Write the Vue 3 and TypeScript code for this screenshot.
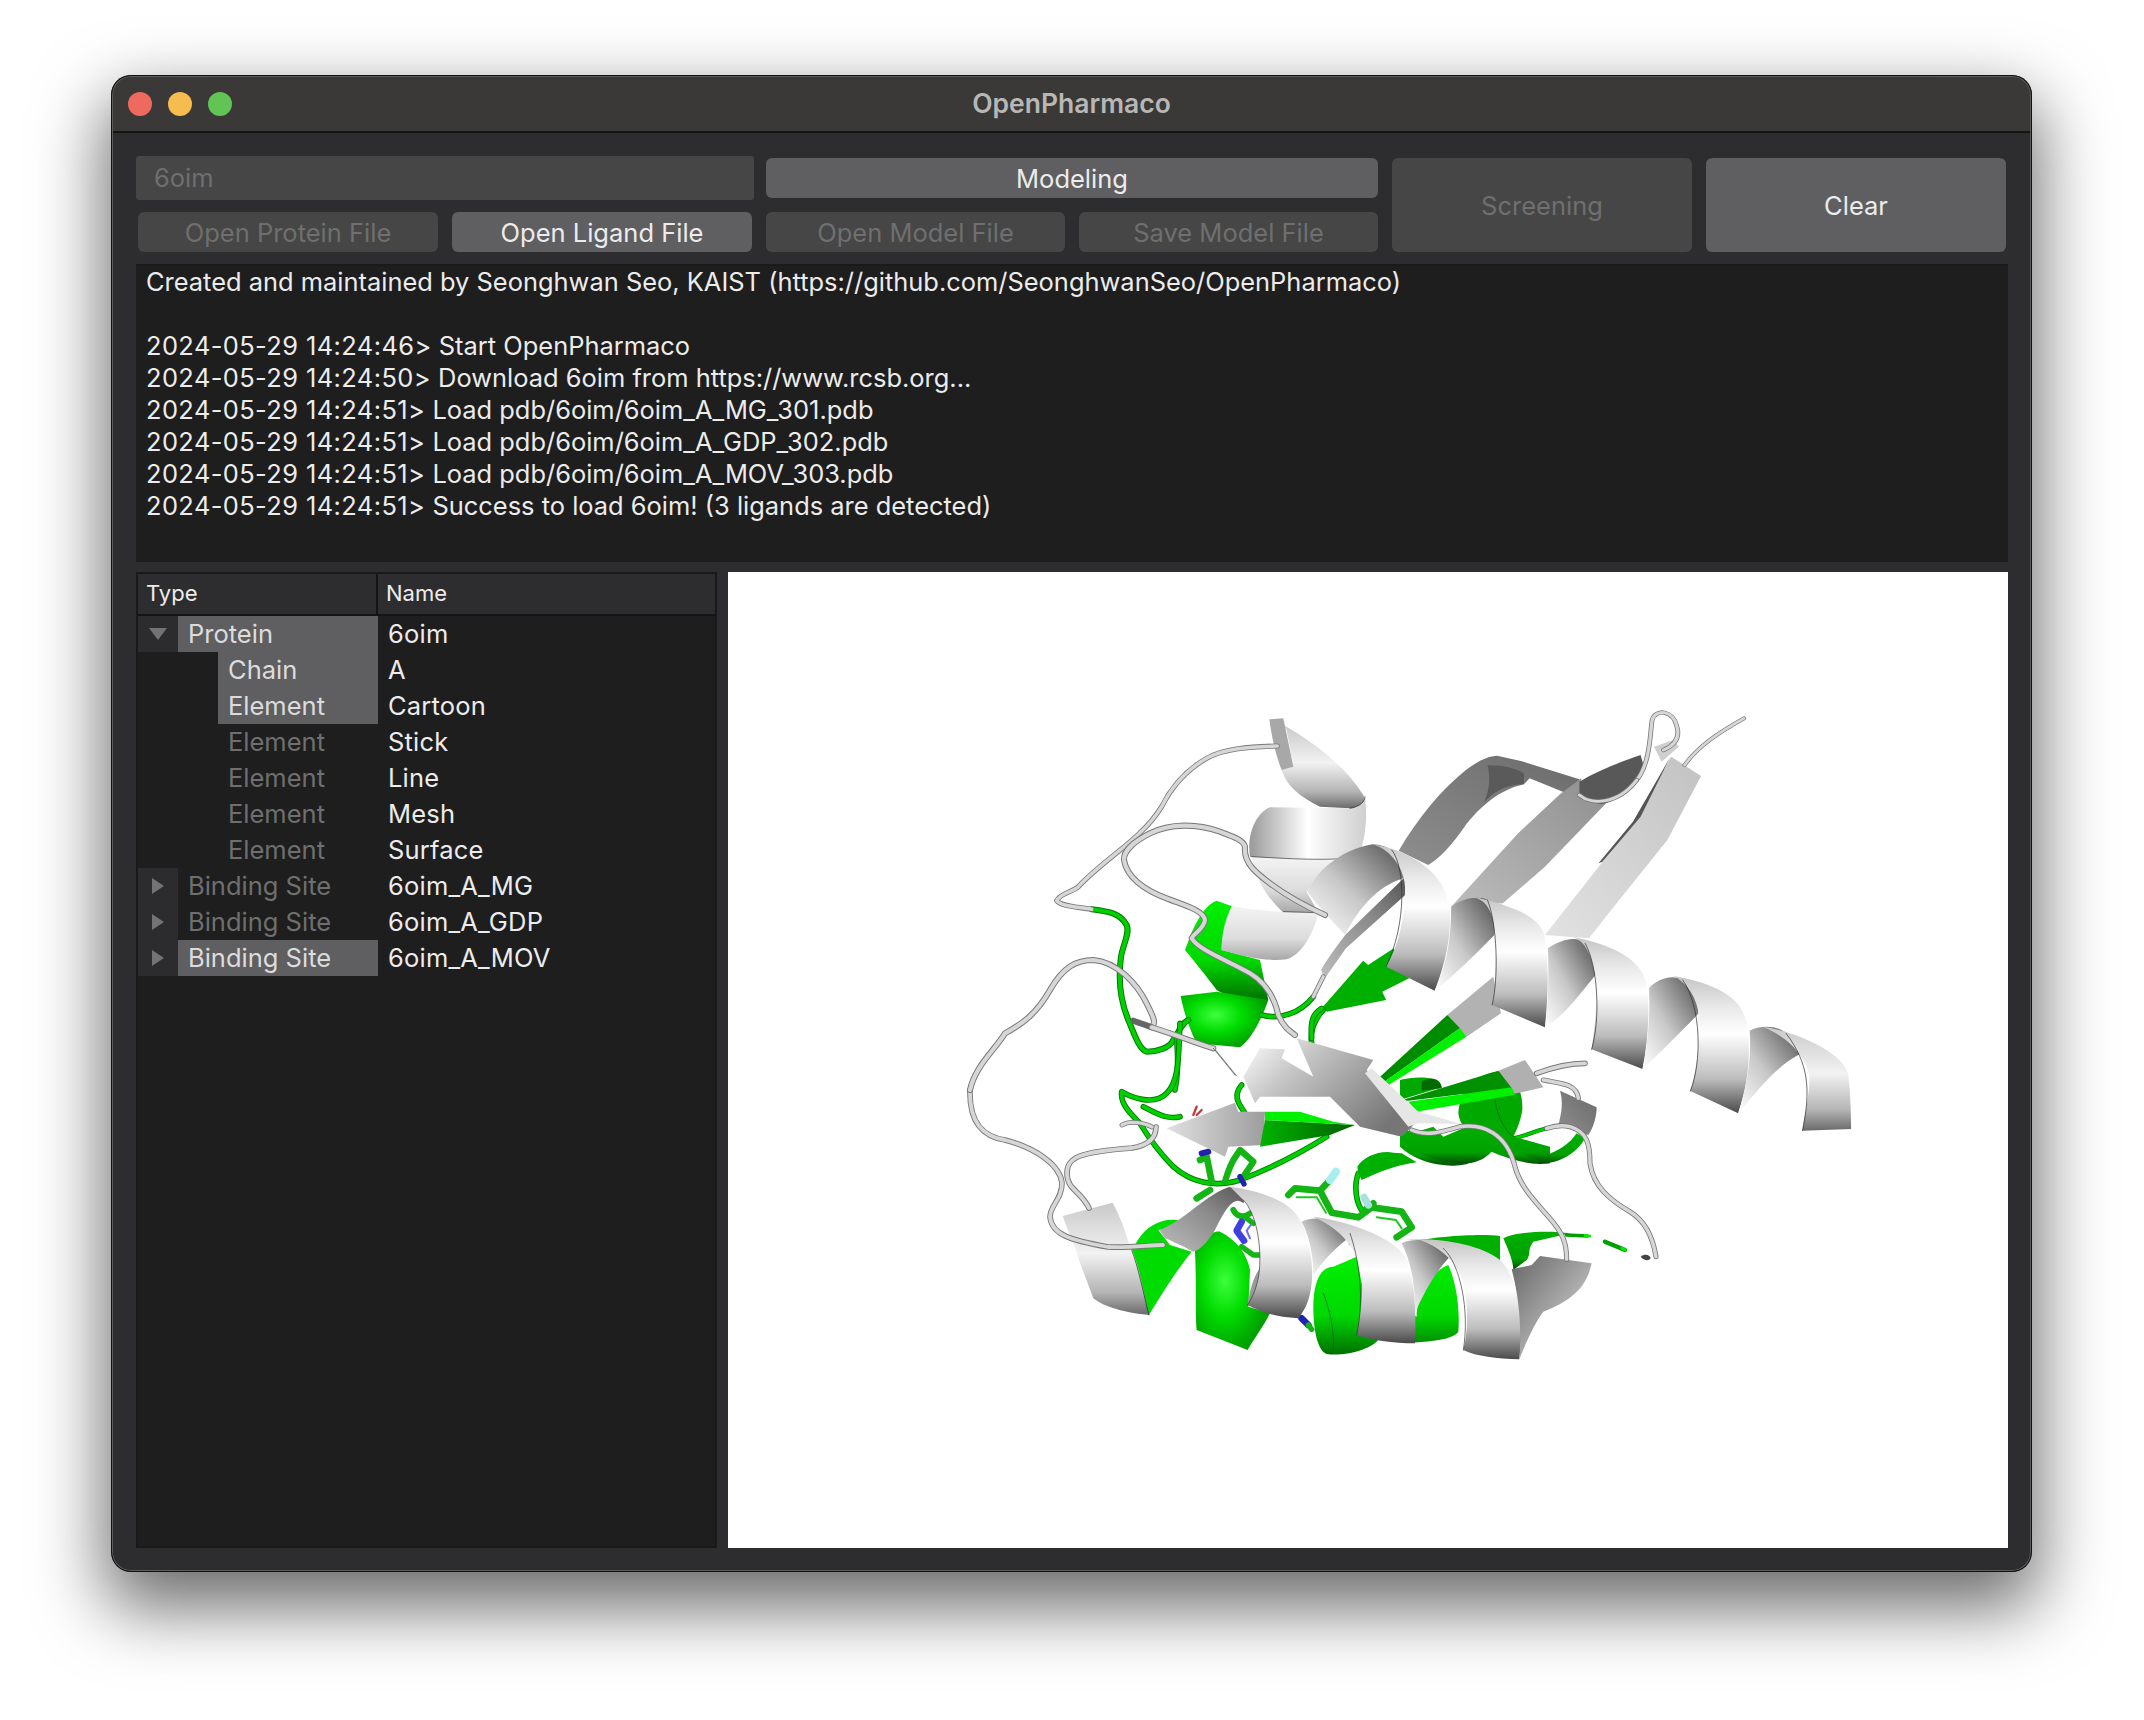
<template>
  <div class="page">
    <div class="window">
      <div class="titlebar">
        <div class="lights">
          <span class="light red"></span>
          <span class="light yellow"></span>
          <span class="light green"></span>
        </div>
        <div class="title">OpenPharmaco</div>
      </div>

      <div class="body">
        <div class="toolbar">
          <div class="col col-file">
            <div class="pdb-input">6oim</div>
            <div class="btn-row inset">
              <button class="btn off">Open Protein File</button>
              <button class="btn on">Open Ligand File</button>
            </div>
          </div>
          <div class="col col-model">
            <button class="btn on modeling">Modeling</button>
            <div class="btn-row">
              <button class="btn off">Open Model File</button>
              <button class="btn off">Save Model File</button>
            </div>
          </div>
          <button class="btn off big">Screening</button>
          <button class="btn on big">Clear</button>
        </div>

        <div class="log">
          <div v-for="(line, i) in logLines" :key="i" class="log-line"><span class="stamp">{{ line.stamp }}</span>{{ line.text }}</div>
        </div>

        <div class="split">
          <div class="tree">
            <div class="tree-head">
              <div class="head-cell head-type">Type</div>
              <div class="head-cell head-name">Name</div>
            </div>
            <div v-for="(row, i) in rows" :key="i" class="tree-row">
              <div class="arrow-cell" :class="{ root: row.arrow }">
                <svg v-if="row.arrow === 'down'" width="18" height="12" viewBox="0 0 18 12"><path d="M0 0H18L9 12Z" fill="#737373" /></svg>
                <svg v-if="row.arrow === 'right'" width="12" height="16" viewBox="0 0 12 16"><path d="M0 0L12 8L0 16Z" fill="#737373" /></svg>
              </div>
              <div class="type-cell" :class="{ child: !row.arrow, sel: row.selected }">{{ row.type }}</div>
              <div class="name-cell">{{ row.name }}</div>
            </div>
          </div>

          <div class="viewer">
            <svg class="protein" viewBox="728 572 1280 976" width="1280" height="976">
              <defs>
                <linearGradient id="front" x1="0" y1="0" x2="0" y2="1">
                  <stop offset="0" stop-color="#c4c4c4" />
                  <stop offset=".22" stop-color="#e8e8e8" />
                  <stop offset=".42" stop-color="#ffffff" />
                  <stop offset=".75" stop-color="#bcbcbc" />
                  <stop offset="1" stop-color="#4a4a4a" />
                </linearGradient>
                <linearGradient id="frontSoft" x1="0" y1="0" x2="0" y2="1">
                  <stop offset="0" stop-color="#c9c9c9" />
                  <stop offset=".45" stop-color="#f2f2f2" />
                  <stop offset=".8" stop-color="#b4b4b4" />
                  <stop offset="1" stop-color="#6a6a6a" />
                </linearGradient>
                <linearGradient id="back" x1="0" y1="1" x2="1" y2="0">
                  <stop offset="0" stop-color="#ffffff" />
                  <stop offset=".45" stop-color="#c8c8c8" />
                  <stop offset="1" stop-color="#4e4e4e" />
                </linearGradient>
                <linearGradient id="band" x1="0" y1="0" x2="1" y2="0">
                  <stop offset="0" stop-color="#999" />
                  <stop offset=".5" stop-color="#fff" />
                  <stop offset="1" stop-color="#cfcfcf" />
                </linearGradient>
                <linearGradient id="bandLow" x1="0" y1="0" x2="0" y2="1">
                  <stop offset="0" stop-color="#f4f4f4" />
                  <stop offset=".6" stop-color="#dcdcdc" />
                  <stop offset="1" stop-color="#a8a8a8" />
                </linearGradient>
                <linearGradient id="twist" x1="0" y1="1" x2="1" y2="0">
                  <stop offset="0" stop-color="#bdbdbd" />
                  <stop offset=".6" stop-color="#8a8a8a" />
                  <stop offset="1" stop-color="#555" />
                </linearGradient>
                <linearGradient id="sheet" x1="0" y1="0" x2="1" y2=".6">
                  <stop offset="0" stop-color="#ffffff" />
                  <stop offset=".35" stop-color="#c6c6c6" />
                  <stop offset="1" stop-color="#767676" />
                </linearGradient>
                <linearGradient id="strandA" x1="0" y1="1" x2="1" y2="0">
                  <stop offset="0" stop-color="#8e8e8e" />
                  <stop offset="1" stop-color="#6b6b6b" />
                </linearGradient>
                <linearGradient id="strandB" x1="0" y1="1" x2="1" y2="0">
                  <stop offset="0" stop-color="#bcbcbc" />
                  <stop offset="1" stop-color="#8f8f8f" />
                </linearGradient>
                <linearGradient id="strandC" x1="0" y1="1" x2="1" y2="0">
                  <stop offset="0" stop-color="#e2e2e2" />
                  <stop offset="1" stop-color="#c2c2c2" />
                </linearGradient>
                <linearGradient id="capEnd" x1="0" y1="0" x2="1" y2="1">
                  <stop offset="0" stop-color="#666" />
                  <stop offset=".55" stop-color="#aaa" />
                  <stop offset=".85" stop-color="#d8d8d8" />
                  <stop offset="1" stop-color="#999" />
                </linearGradient>
                <linearGradient id="leftStrand" x1="0" y1="0" x2="1" y2="0">
                  <stop offset="0" stop-color="#e0e0e0" />
                  <stop offset="1" stop-color="#9d9d9d" />
                </linearGradient>
                <linearGradient id="gDark" x1="0" y1="0" x2="1" y2="0">
                  <stop offset="0" stop-color="#00b400" />
                  <stop offset="1" stop-color="#005f00" />
                </linearGradient>
                <radialGradient id="gBright" cx=".4" cy=".42" r=".6">
                  <stop offset="0" stop-color="#3cff3c" />
                  <stop offset=".5" stop-color="#00dc00" />
                  <stop offset="1" stop-color="#00a000" />
                </radialGradient>
                <linearGradient id="gBand" x1="0" y1="0" x2="0" y2="1">
                  <stop offset="0" stop-color="#00b000" />
                  <stop offset=".7" stop-color="#00a000" />
                  <stop offset="1" stop-color="#004f00" />
                </linearGradient>
                <linearGradient id="gTop" x1="0" y1="0" x2="0" y2="1">
                  <stop offset="0" stop-color="#00f000" />
                  <stop offset=".6" stop-color="#00d800" />
                  <stop offset="1" stop-color="#007000" />
                </linearGradient>
              </defs>
              <g v-for="(layer, li) in layers" :key="li" :transform="layer.at">
                <template v-for="(s, si) in layer.shapes" :key="si">
                  <template v-if="s.tube">
                    <path :d="s.d" fill="none" :stroke="s.tube === 'g' ? '#007a00' : '#777'" :stroke-width="(s.w ?? 12) * 1.4" stroke-linecap="round" stroke-linejoin="round" />
                    <path :d="s.d" fill="none" :stroke="s.tube === 'g' ? '#00d000' : '#d6d6d6'" :stroke-width="(s.w ?? 12) * 0.95" stroke-linecap="round" stroke-linejoin="round" />
                  </template>
                  <path v-else-if="s.line" :d="s.d" fill="none" :stroke="s.line" :stroke-width="s.w ?? 2" stroke-linecap="round" stroke-linejoin="round" />
                  <path v-else :d="s.d" :fill="s.f" />
                </template>
              </g>
            </svg>
          </div>
        </div>
      </div>
    </div>
  </div>
</template>

<script setup lang="ts">
interface TreeRow {
  type: string;
  name: string;
  arrow?: 'down' | 'right';
  selected?: boolean;
}

interface Shape {
  d: string;
  f?: string;
  tube?: 'g' | 'w';
  line?: string;
  w?: number;
}

const logLines = [
  { stamp: '', text: 'Created and maintained by Seonghwan Seo, KAIST (https://github.com/SeonghwanSeo/OpenPharmaco)' },
  { stamp: '', text: '\u00a0' },
  { stamp: '2024-05-29 14:24:46>', text: ' Start OpenPharmaco' },
  { stamp: '2024-05-29 14:24:50>', text: ' Download 6oim from https://www.rcsb.org...' },
  { stamp: '2024-05-29 14:24:51>', text: ' Load pdb/6oim/6oim_A_MG_301.pdb' },
  { stamp: '2024-05-29 14:24:51>', text: ' Load pdb/6oim/6oim_A_GDP_302.pdb' },
  { stamp: '2024-05-29 14:24:51>', text: ' Load pdb/6oim/6oim_A_MOV_303.pdb' },
  { stamp: '2024-05-29 14:24:51>', text: ' Success to load 6oim! (3 ligands are detected)' },
];

const rows: TreeRow[] = [
  { type: 'Protein', name: '6oim', arrow: 'down', selected: true },
  { type: 'Chain', name: 'A', selected: true },
  { type: 'Element', name: 'Cartoon', selected: true },
  { type: 'Element', name: 'Stick' },
  { type: 'Element', name: 'Line' },
  { type: 'Element', name: 'Mesh' },
  { type: 'Element', name: 'Surface' },
  { type: 'Binding Site', name: '6oim_A_MG', arrow: 'right' },
  { type: 'Binding Site', name: '6oim_A_GDP', arrow: 'right' },
  { type: 'Binding Site', name: '6oim_A_MOV', arrow: 'right', selected: true },
];

// each layer is traced in the coordinates of one reference crop
const upperLeft = 'translate(950 690) scale(.33333)';
const upperRight = 'translate(1300 690) scale(.38270 .33333)';
const center = 'translate(1100 980) scale(.33333)';
const lower = 'translate(1050 1150) scale(.33333)';
const right = 'translate(1400 1000) scale(.33333)';

const layers: { at: string; shapes: Shape[] }[] = [
  {
    at: upperRight,
    shapes: [
      { d: 'M258 482C310 380 370 300 425 248C460 215 490 198 515 197L580 214L730 268L735 328L600 265L585 283C520 300 470 350 430 410C400 460 370 500 335 525Z', f: 'url(#strandA)' },
      { d: 'M490 226C530 225 565 235 585 250L585 283C540 280 500 310 480 340C500 290 495 250 490 226Z', f: '#5a5a5a' },
      { d: 'M395 650L570 430L680 312L735 265L735 325L800 340L640 530L530 640Z', f: 'url(#strandB)' },
      { d: 'M730 275C780 240 840 215 890 195L900 235C870 285 830 335 790 342C760 340 740 325 730 310Z', f: '#585858' },
      { d: 'M640 735L870 400L970 200L1048 258L960 450L820 650L755 745Z', f: 'url(#strandC)' },
      { d: 'M780 520L870 395L968 200L890 380L790 515Z', f: '#555' },
      { d: 'M925 170L975 150L990 170L945 215Z', f: '#cfcfcf' },
      { d: 'M55 840C80 790 100 765 118 735L275 560L275 615L120 775L65 865Z', f: 'url(#twist)' },
      { d: 'M60 950L165 812L178 825L245 775L285 865L215 905L225 930L70 965Z', f: '#00b000' },
      { d: 'M385 975L505 860L525 970L435 1040Z', f: '#b2b2b2' },
      { d: 'M205 1165L385 975L418 1015L215 1180Z', f: '#008c00' },
      { d: 'M215 1180L418 1015L435 1040L222 1192Z', f: '#00f000' },
    ],
  },
  {
    at: upperLeft,
    shapes: [
      { d: 'M720 740C740 690 770 640 800 632L850 650C830 690 815 740 815 780L930 810L955 930C900 940 830 920 800 900C770 860 730 810 705 780Z', f: 'url(#gTop)' },
      { d: 'M692 918L800 905L955 930C930 1000 900 1050 870 1072L740 1060C715 1010 700 960 692 918Z', f: 'url(#gBright)' },
      { d: 'M1000 105C1080 150 1180 220 1240 315C1250 340 1240 358 1200 355L1110 350C1050 320 1010 290 995 240L1030 230L1010 120Z', f: 'url(#frontSoft)' },
      { d: 'M958 88L1000 85L1030 230L995 240C975 190 965 140 958 88Z', f: '#a8a8a8' },
      { d: 'M905 500L1150 510L1070 605L1105 668L1000 668C960 630 920 580 905 500Z', f: 'url(#bandLow)' },
      { d: 'M960 352L1200 355C1230 350 1245 335 1245 320C1255 400 1240 470 1225 500C1150 515 1000 505 900 500C890 440 915 370 960 352Z', f: 'url(#band)' },
      { d: 'M845 648C900 660 1000 668 1105 668C1090 730 1060 790 1010 808C950 815 880 800 815 780C815 730 825 690 845 648Z', f: 'url(#bandLow)' },
      { d: 'M905 500C1000 505 1150 515 1225 500M1000 665L1105 668', line: '#333', w: 2 },
      { d: 'M1200 355C1230 350 1245 335 1245 320', line: '#222', w: 2 },
      { d: 'M425 658C480 665 510 670 530 705C540 730 520 760 513 800C505 860 510 930 535 990C555 1040 570 1080 590 1085C620 1085 660 1075 670 1050C690 1020 695 1000 715 990', tube: 'g', w: 13 },
      { d: 'M675 1200C690 1130 680 1060 680 1040', tube: 'g', w: 12 },
      { d: 'M935 975C990 990 1050 970 1090 920', tube: 'g', w: 12 },
      { d: 'M1120 960C1090 990 1080 1030 1085 1060', tube: 'g', w: 12 },
      { d: 'M1090 920L1120 860', tube: 'w', w: 10 },
    ],
  },
  {
    at: center,
    shapes: [
      { d: 'M240 130C235 220 240 300 200 340C160 380 90 350 65 335C60 370 90 400 120 430C150 480 180 520 220 560C270 605 340 625 420 600C500 570 600 520 680 470', tube: 'g', w: 12 },
      { d: 'M130 380C170 400 200 420 240 410', tube: 'g', w: 12 },
      { d: 'M425 315C395 350 420 375 435 400', tube: 'g', w: 12 },
      { d: 'M635 175C630 120 640 100 665 85', tube: 'g', w: 12 },
      { d: 'M775 580C760 620 770 670 785 690', tube: 'g', w: 12 },
      { d: 'M280 405L290 380M290 405L305 390', line: '#c23a3a', w: 7 },
      { d: 'M300 540L320 530L335 605', line: '#14b414', w: 20 },
      { d: 'M375 605C385 570 395 545 410 525L420 510L460 545L430 590', line: '#14b414', w: 19 },
      { d: 'M305 520L325 515', line: '#2222b0', w: 18 },
      { d: 'M420 590L432 612', line: '#2222b0', w: 16 },
      { d: 'M290 655L330 630', line: '#14b414', w: 20 },
      { d: 'M565 645L585 625L660 632L695 698L775 712L815 682L905 695L935 742L890 772', line: '#14b414', w: 20 },
      { d: 'M590 652L650 652L678 698M830 712L888 720L905 745', line: '#1fc81f', w: 6 },
      { d: 'M660 632L690 600', line: '#14b414', w: 20 },
      { d: 'M690 600L708 575', line: '#a8eef0', w: 24 },
      { d: 'M800 685L820 670', line: '#14b414', w: 20 },
      { d: 'M805 675L792 652', line: '#a8dfe0', w: 22 },
      { d: 'M772 560C790 530 840 510 880 518L905 520L950 547C890 555 840 575 785 600L775 580Z', f: '#00b000' },
      { d: 'M400 690C410 710 430 715 450 700', line: '#14b414', w: 18 },
      { d: 'M440 715L460 730', line: '#14b414', w: 16 },
      { d: 'M425 800L460 825L480 825', line: '#14b414', w: 16 },
      { d: 'M425 725L410 752L432 782', line: '#4040e0', w: 20 },
      { d: 'M452 735L440 752L450 775', line: '#6a6aff', w: 6 },
      { d: 'M605 1015L625 1035', line: '#2222b0', w: 20 },
      { d: 'M625 1035L635 1048', line: '#14b414', w: 16 },
      { d: 'M750 792L760 795', line: '#a33', w: 8 },
    ],
  },
  {
    at: right,
    shapes: [
      { d: 'M175 340C180 260 240 220 290 215C350 220 370 280 367 330C360 370 350 390 340 410L240 420C200 400 178 370 175 340Z', f: '#00a800' },
      { d: 'M0 240C40 230 120 225 125 262L0 300Z', f: '#00a800' },
      { d: 'M65 245C95 225 125 240 125 265L65 272Z', f: '#006c00' },
      { d: 'M0 395C30 380 70 410 110 445C160 480 200 470 240 425L290 430C250 480 200 505 130 495C80 490 30 470 0 440Z', f: 'url(#gBand)' },
      { d: 'M220 430L340 410C370 450 400 480 430 470C480 450 510 430 530 400L555 415C530 460 480 490 420 492C350 490 280 460 220 430Z', f: 'url(#gBand)' },
      { d: 'M285 300C290 340 310 390 340 410', line: '#006000', w: 2 },
      { d: 'M480 272L590 322C590 350 580 385 565 405L530 395L475 375C485 340 490 305 480 272Z', f: 'url(#strandA)' },
      { d: 'M295 212L375 180L430 262L340 282Z', f: '#b0b0b0' },
      { d: 'M0 302L295 212L335 264L25 302Z', f: '#009000' },
      { d: 'M25 305L335 262L345 284L50 335Z', f: '#00f000' },
      { d: 'M340 415C370 410 400 395 440 385', tube: 'g', w: 9 },
      { d: 'M310 715C340 695 450 690 510 700L400 725C380 750 395 760 380 780L340 810C340 780 320 740 310 715Z', f: 'url(#gBand)' },
      { d: 'M500 705L562 708', line: '#00a000', w: 11 },
      { d: 'M615 725L675 750', line: '#00a000', w: 13 },
      { d: 'M555 707L570 708M665 745L676 750', line: '#00ee00', w: 8 },
      { d: 'M722 770C735 760 750 765 752 775C745 785 730 780 722 770Z', f: '#444' },
    ],
  },
  {
    at: lower,
    shapes: [
      { d: 'M265 268C290 230 330 205 380 210L430 225L325 240L360 285L425 305C380 360 330 440 297 495L280 480C275 420 265 350 245 300Z', f: '#00dc00' },
      { d: 'M435 305C440 270 490 240 510 245C560 270 590 310 600 360L595 470L660 490C640 530 610 570 593 600L440 540C435 490 440 400 435 305Z', f: 'url(#gBright)' },
      { d: 'M790 470C790 400 810 350 850 350L920 320L935 400L1100 500C1100 430 1150 360 1195 345C1220 400 1230 480 1225 545C1210 570 1130 575 1085 578L985 570C960 600 880 620 830 612C800 600 790 530 790 470Z', f: 'url(#gTop)' },
      { d: 'M820 430C840 480 855 550 850 605', line: '#054', w: 2 },
      { d: 'M1090 275C1150 260 1290 250 1350 258L1350 330L1250 350C1210 310 1150 270 1090 275Z', f: '#00b000' },
    ],
  },
  {
    at: center,
    shapes: [
      { d: 'M430 290L480 205L555 208L545 235L640 290L590 175L820 240L800 270L945 430L905 470L780 440L690 350L480 350L465 370Z', f: 'url(#sheet)' },
      { d: 'M795 280L815 265L955 395L1085 432L955 430L925 440Z', f: '#e6e6e6' },
      { d: 'M200 445L405 368L415 395L495 395L490 495L385 500L375 530Z', f: 'url(#leftStrand)' },
      { d: 'M495 420L765 435L690 465L480 500Z', f: 'url(#gDark)' },
      { d: 'M495 395L600 395L700 425L765 435L495 420Z', f: '#00f000' },
      { d: 'M900 470C930 510 1000 550 1090 550C1140 550 1160 530 1180 510L1240 500C1280 530 1320 555 1350 550L1350 500L1240 470L1100 440L1030 470L1000 440Z', f: 'url(#gBand)' },
      { d: 'M340 202L410 288', line: '#444', w: 2 },
    ],
  },
  {
    at: upperRight,
    shapes: [
      { d: 'M20 605C40 550 100 480 190 463C230 465 265 490 275 560L270 565C200 590 150 660 118 735C90 700 40 640 20 605Z', f: 'url(#back)' },
      { d: 'M190 463C280 480 380 540 392 660C395 740 380 820 352 902L225 830C260 760 270 700 275 600C275 540 240 480 190 463Z', f: 'url(#front)' },
      { d: 'M395 650C420 625 470 615 490 630C510 660 510 700 508 735C470 780 400 860 352 902C385 820 395 740 395 650Z', f: 'url(#back)' },
      { d: 'M450 620C530 640 620 670 637 730C650 800 650 900 640 1012L502 945C515 880 510 800 508 720C505 670 490 630 450 620Z', f: 'url(#front)' },
      { d: 'M648 775C680 750 720 735 745 760C770 800 772 830 772 855C740 900 690 980 640 1012C650 930 650 850 648 775Z', f: 'url(#back)' },
      { d: 'M715 742C800 760 890 800 905 880C915 950 910 1050 895 1137L762 1078C772 1000 778 930 770 850C760 790 745 755 715 742Z', f: 'url(#front)' },
      { d: 'M912 895C930 870 970 850 1000 870C1030 900 1040 930 1042 970C1000 1020 940 1090 895 1137C910 1060 915 970 912 895Z', f: 'url(#back)' },
      { d: 'M975 858C1060 875 1150 910 1165 990C1180 1060 1175 1170 1145 1270L1020 1203C1040 1130 1045 1040 1040 960C1030 905 1000 870 975 858Z', f: 'url(#front)' },
      { d: 'M1175 1022C1200 1005 1250 1005 1270 1030C1300 1060 1320 1090 1310 1090C1240 1130 1190 1210 1145 1270C1170 1180 1180 1100 1175 1022Z', f: 'url(#back)' },
      { d: 'M1210 1010C1300 1025 1420 1090 1432 1150C1438 1200 1440 1270 1440 1317L1313 1322C1320 1260 1335 1200 1330 1150C1320 1110 1290 1050 1210 1010Z', f: 'url(#frontSoft)' },
      { d: 'M240 480C275 530 280 700 225 830', line: '#333', w: 2 },
      { d: 'M490 630C515 700 520 860 502 945', line: '#333', w: 2 },
      { d: 'M745 760C780 830 785 990 762 1078', line: '#333', w: 2 },
      { d: 'M1000 870C1050 950 1050 1120 1020 1203', line: '#333', w: 2 },
      { d: 'M1270 1030C1330 1120 1335 1200 1313 1322', line: '#333', w: 2 },
      { d: 'M880 270C915 220 915 130 920 90C930 55 975 60 985 110C995 150 970 170 950 180', tube: 'w', w: 9 },
      { d: 'M730 315C760 345 830 345 880 270', tube: 'w', w: 9 },
      { d: 'M1005 225C1040 170 1090 130 1160 85', tube: 'w', w: 8 },
    ],
  },
  {
    at: lower,
    shapes: [
      { d: 'M38 198L188 158C210 200 225 240 235 275C265 330 280 420 297 495C230 490 160 470 130 445C110 390 85 330 75 290C60 260 50 230 38 198Z', f: 'url(#frontSoft)' },
      { d: 'M245 300C265 350 280 430 297 495', line: '#222', w: 2 },
      { d: 'M630 355C610 380 600 420 592 465L620 440C630 410 630 380 630 355Z', f: '#999' },
      { d: 'M328 240C400 215 470 130 540 110C560 120 590 150 580 160C550 130 520 190 495 240C470 280 450 300 430 305C400 290 360 270 345 265Z', f: 'url(#twist)' },
      { d: 'M540 110C620 120 720 150 750 210C780 260 790 340 785 400C780 450 765 480 745 505C680 500 640 490 592 465C610 440 625 400 628 360C635 290 620 190 580 150Z', f: 'url(#front)' },
      { d: 'M580 150C620 190 635 290 628 360C625 400 610 440 592 465', line: '#333', w: 2 },
      { d: 'M755 215C800 195 850 205 900 260C860 290 820 330 790 375C790 320 780 260 755 215Z', f: 'url(#back)' },
      { d: 'M790 200C880 210 1040 260 1070 330C1090 380 1100 460 1095 580C1030 580 960 570 920 555C930 500 940 440 935 380C925 320 900 250 790 200Z', f: 'url(#front)' },
      { d: 'M900 250C925 320 945 440 920 555', line: '#333', w: 2 },
      { d: 'M1055 280C1100 260 1160 270 1200 320C1160 360 1120 430 1095 490C1095 400 1085 340 1055 280Z', f: 'url(#back)' },
    ],
  },
  {
    at: right,
    shapes: [
      { d: 'M10 720C100 710 240 730 300 780C340 820 365 900 365 1000L358 1078C290 1075 230 1070 190 1050C205 990 205 920 190 850C170 790 130 745 60 720Z', f: 'url(#front)' },
      { d: 'M130 745C180 790 210 930 190 1050', line: '#333', w: 2 },
      { d: 'M335 808L395 795L420 768L575 790C565 830 550 890 430 935C410 960 380 1020 358 1078C365 1000 360 900 335 808Z', f: 'url(#capEnd)' },
      { d: 'M35 390C80 410 130 395 180 380C250 370 320 400 345 500C360 560 410 610 445 650C490 700 500 730 500 778', tube: 'w', w: 11 },
      { d: 'M440 385C470 375 490 375 510 380C560 395 570 430 570 490C580 560 630 600 690 635C740 665 760 720 768 770', tube: 'w', w: 11 },
      { d: 'M410 220C450 205 500 190 555 190', tube: 'w', w: 12 },
      { d: 'M430 240C480 250 530 250 535 295', tube: 'w', w: 11 },
    ],
  },
  {
    at: 'translate(0 0)',
    shapes: [
      { d: 'M970 1090C969 1125 985 1137 1005 1140C1036 1148 1060 1165 1062 1183C1062 1200 1050 1205 1050 1217C1052 1235 1070 1240 1108 1247C1130 1248 1150 1245 1163 1245', tube: 'w', w: 4 },
      { d: 'M1089 1208C1080 1190 1067 1190 1067 1173C1067 1157 1080 1152 1132 1148C1150 1145 1156 1137 1156 1127', tube: 'w', w: 4 },
      { d: 'M1152 1127C1145 1123 1130 1120 1122 1125', tube: 'w', w: 3.5 },
    ],
  },
  {
    at: upperLeft,
    shapes: [
      { d: 'M982 168C900 170 820 175 770 205C700 245 660 300 635 350C610 390 590 410 570 428C530 470 440 530 385 590C370 605 330 610 320 632C335 650 380 650 425 658', tube: 'w', w: 11 },
      { d: 'M1125 675C1070 650 1000 610 960 580C920 550 880 520 885 470C880 450 850 440 810 425C740 400 660 400 600 430C560 450 520 480 522 510C530 560 580 600 650 625C700 645 760 660 765 690C760 720 730 730 725 745C745 780 830 810 900 850C950 880 975 930 985 975C1000 1010 1015 1020 1035 1035', tube: 'w', w: 13 },
      { d: 'M60 1200C75 1130 130 1085 165 1030C220 1000 260 970 300 900C340 830 380 810 430 810C500 815 560 880 590 940C610 980 620 1000 605 1010', tube: 'w', w: 13 },
      { d: 'M550 992C570 1000 590 1005 605 1012', line: '#666', w: 18 },
      { d: 'M605 1012C680 1035 740 1060 790 1075', tube: 'w', w: 13 },
      { d: 'M790 1075L855 1155', line: '#444', w: 2 },
    ],
  },
];
</script>

<style scoped>
.page {
  width: 2144px;
  height: 1720px;
  padding: 75px 0 0 111px;
  box-sizing: border-box;
  background: #fff;
  overflow: hidden;
  font-family: Inter, "Liberation Sans", sans-serif;
}

.window {
  position: relative;
  width: 1921px;
  height: 1497px;
  box-sizing: border-box;
  display: flex;
  flex-direction: column;
  background: #2d2d2f;
  border-radius: 20px;
  overflow: hidden;
  box-shadow: 0 30px 70px 6px rgba(0, 0, 0, 0.58);
}

.window::after {
  content: "";
  position: absolute;
  inset: 0;
  border: 1px solid #111;
  border-radius: 20px;
  box-shadow: inset 0 0 0 1px #5c5c5c;
  pointer-events: none;
}

.titlebar {
  position: relative;
  flex: none;
  height: 58px;
  display: flex;
  align-items: center;
  justify-content: center;
  background: #3a3937;
  border-bottom: 2px solid #141414;
  box-sizing: border-box;
}

.lights {
  position: absolute;
  left: 17px;
  top: 17px;
  display: flex;
  gap: 16px;
}

.light {
  width: 24px;
  height: 24px;
  border-radius: 50%;
}

.red { background: #ee6a5f; }
.yellow { background: #f5bd4f; }
.green { background: #61c454; }

.title {
  color: #b7b7b6;
  font-size: 26.5px;
  font-weight: 600;
}

.body {
  flex: 1;
  display: flex;
  flex-direction: column;
  padding: 23px 24px 24px 25px;
  min-height: 0;
}

.toolbar {
  flex: none;
  display: flex;
  height: 96px;
}

.col {
  display: flex;
  flex-direction: column;
}

.col-file {
  width: 618px;
  margin-right: 12px;
}

.col-model {
  width: 612px;
  margin-right: 14px;
}

.pdb-input {
  height: 44px;
  padding-left: 18px;
  line-height: 44px;
  font-size: 25.5px;
  color: #6f6f6f;
  background: #464646;
  border-radius: 3px;
}

.btn-row {
  display: flex;
  gap: 14px;
  margin-top: 12px;
}

.btn-row.inset {
  padding: 0 2px;
}

.btn-row .btn {
  flex: 1;
  height: 40px;
}

.col-model .btn-row {
  margin-top: 14px;
}

.btn {
  border: none;
  border-radius: 6px;
  padding: 0;
  font: inherit;
  font-size: 25.5px;
}

.btn.on {
  background: #5f5f61;
  color: #ececec;
}

.btn.off {
  background: #464646;
  color: #6f6f6f;
}

.modeling {
  height: 40px;
  margin-top: 2px;
}

.big {
  width: 300px;
  height: 94px;
  margin-top: 2px;
  flex: none;
}

.big + .big {
  margin-left: 14px;
}

.log {
  flex: none;
  height: 298px;
  margin-top: 12px;
  padding: 2px 10px 0;
  box-sizing: border-box;
  background: #1e1e1e;
  color: #ececec;
  font-size: 25.45px;
  line-height: 32px;
  box-shadow: inset 0 2px 0 #1a1a1a;
}

.stamp {
  letter-spacing: 0.4px;
}

.split {
  flex: 1;
  display: flex;
  gap: 11px;
  margin-top: 10px;
  min-height: 0;
}

.tree {
  width: 581px;
  flex: none;
  box-sizing: border-box;
  background: #1e1e1e;
  border: 2px solid #191919;
  font-size: 25.5px;
}

.tree-head {
  display: flex;
  height: 40px;
  background: #2d2d2f;
  border-bottom: 2px solid #141414;
  color: #ececec;
  font-size: 22px;
  line-height: 39px;
}

.head-cell {
  box-sizing: border-box;
  padding-left: 8px;
}

.head-type {
  width: 240px;
  border-right: 2px solid #141414;
}

.tree-row {
  display: flex;
  height: 36px;
  line-height: 36px;
}

.arrow-cell {
  flex: none;
  width: 40px;
  display: flex;
  align-items: center;
  justify-content: center;
}

.arrow-cell.root {
  background: #2c2c2e;
}

.type-cell {
  flex: none;
  width: 200px;
  box-sizing: border-box;
  padding-left: 10px;
  color: #6f6f6f;
}

.type-cell.child {
  width: 160px;
  margin-left: 40px;
}

.type-cell.sel {
  background: #5f5f61;
  color: #dcdcdc;
}

.name-cell {
  padding-left: 10px;
  color: #ececec;
  letter-spacing: 0.2px;
}

.viewer {
  flex: 1;
  background: #fff;
  min-width: 0;
}

.protein {
  display: block;
}
</style>

<style>
html,
body {
  margin: 0;
  background: #fff;
}
</style>
